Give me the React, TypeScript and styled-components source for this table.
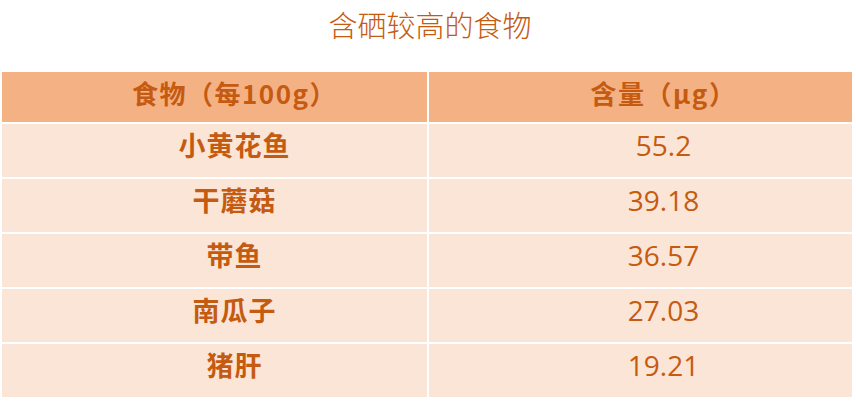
import React from "react";
import styled, { createGlobalStyle } from "styled-components";

const Global = createGlobalStyle`
  html, body { margin: 0; padding: 0; background: #ffffff; }
  body { width: 856px; height: 401px; overflow: hidden; }
`;

const Page = styled.div`
  width: 856px;
  height: 401px;
  display: flex;
  flex-direction: column;
`;

const Title = styled.h1`
  margin: 0;
  height: 72px;
  display: flex;
  justify-content: center;
  padding-top: 6px;
  padding-left: 4px;
  box-sizing: border-box;
  font-family: "Noto Sans CJK SC", sans-serif;
  font-weight: 300;
  font-size: 29px;
  line-height: 36px;
  color: #c55a11;
`;

const Table = styled.div`
  margin-left: 2px;
  width: 850px;
  display: grid;
  grid-template-columns: 425px 423px;
  grid-template-rows: 50px repeat(5, 53px);
  gap: 2px;
`;

const Cell = styled.div<{ $head?: boolean; $num?: boolean }>`
  background: ${(p) => (p.$head ? "#f4b183" : "#fbe5d6")};
  color: #c55a11;
  display: flex;
  justify-content: center;
  align-items: ${(p) => (p.$head ? "center" : "flex-start")};
  padding-top: ${(p) => (p.$head ? "0" : "2px")};
  padding-bottom: ${(p) => (p.$head ? "9px" : "0")};
  padding-left: ${(p) => (p.$num ? "46px" : "40px")};
  box-sizing: border-box;
  font-family: ${(p) =>
    p.$num && !p.$head
      ? '"Open Sans", "Liberation Sans", sans-serif'
      : '"Noto Sans CJK SC", sans-serif'};
  font-weight: ${(p) => (p.$num && !p.$head ? 400 : 700)};
  font-size: ${(p) => (p.$head ? "26px" : p.$num ? "28px" : "27px")};
  letter-spacing: ${(p) => (p.$head ? "1.5px" : p.$num ? "0" : "1px")};
  line-height: 38px;
`;

const rows: [string, string][] = [
  ["小黄花鱼", "55.2"],
  ["干蘑菇", "39.18"],
  ["带鱼", "36.57"],
  ["南瓜子", "27.03"],
  ["猪肝", "19.21"],
];

export default function App() {
  return (
    <Page>
      <Global />
      <Title>含硒较高的食物</Title>
      <Table>
        <Cell $head>食物（每100g）</Cell>
        <Cell $head $num>含量（μg）</Cell>
        {rows.map(([food, amount]) => (
          <React.Fragment key={food}>
            <Cell>{food}</Cell>
            <Cell $num>{amount}</Cell>
          </React.Fragment>
        ))}
      </Table>
    </Page>
  );
}
